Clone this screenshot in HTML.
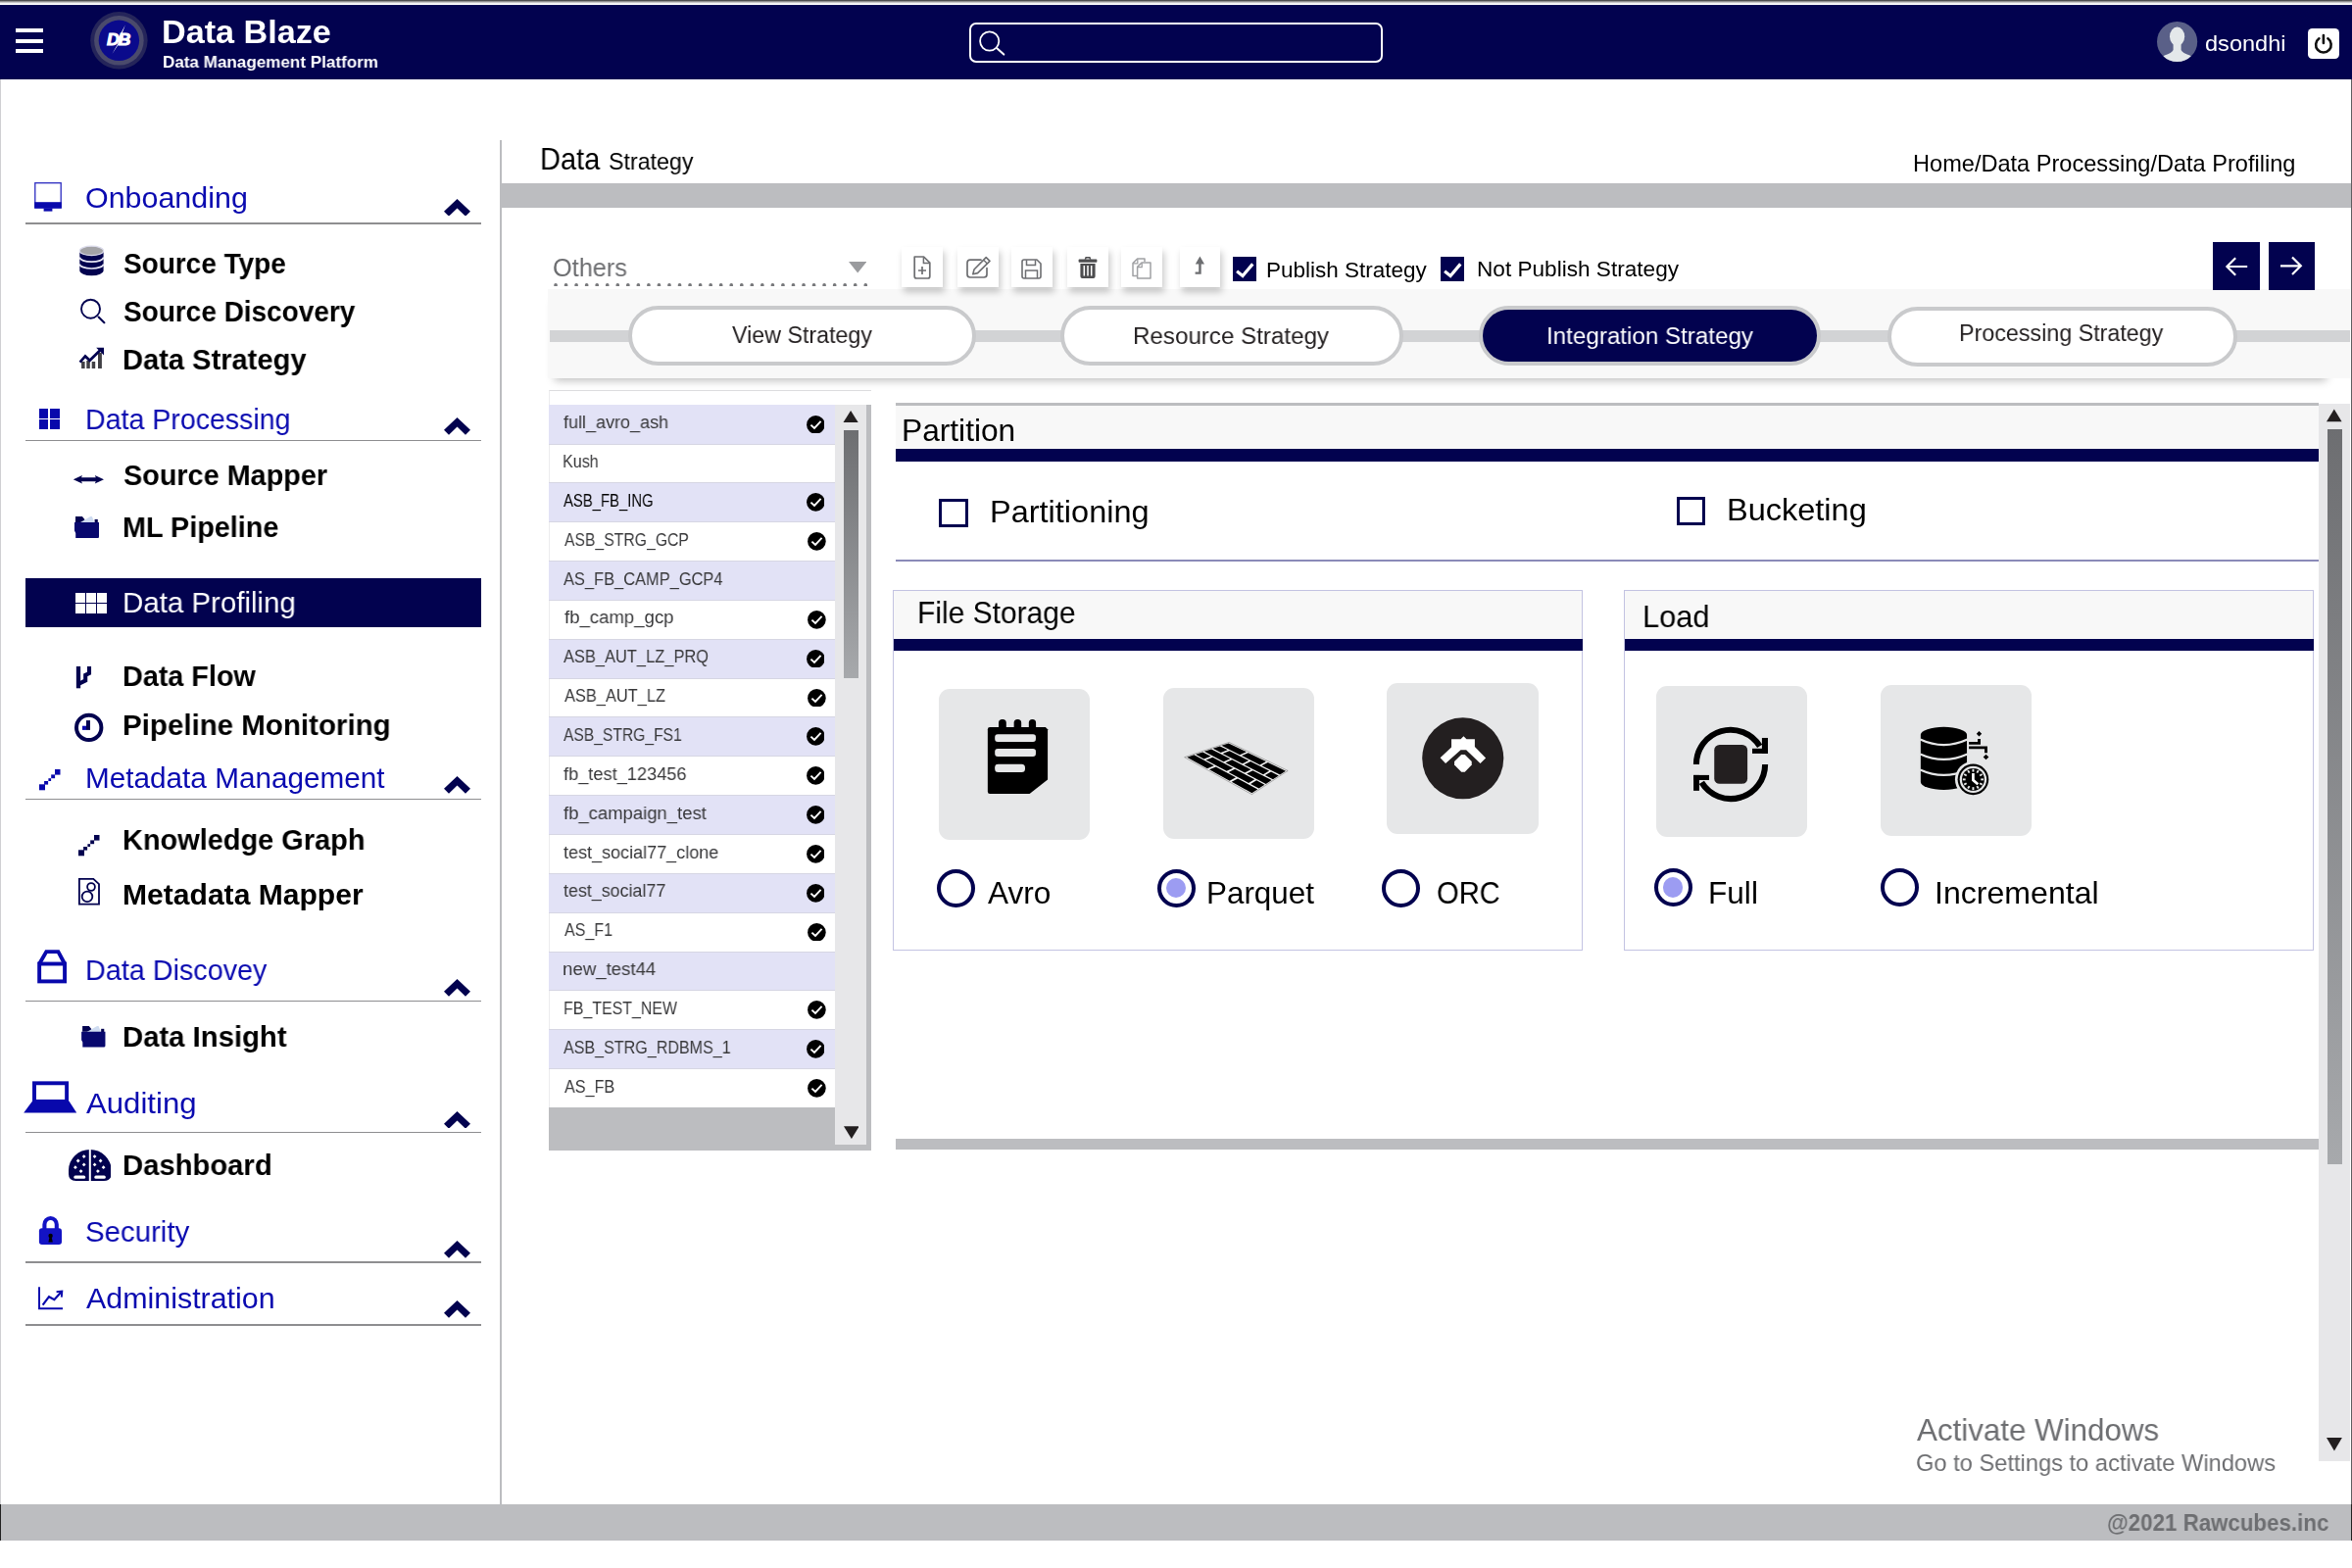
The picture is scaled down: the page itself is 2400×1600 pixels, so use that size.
<!DOCTYPE html>
<html lang="en"><head><meta charset="utf-8"><title>Data Blaze - Data Strategy</title>
<style>
html,body{margin:0;padding:0;background:#fff;}
body{width:2400px;height:1600px;position:relative;overflow:hidden;font-family:"Liberation Sans", sans-serif;}
body>div,body>svg,body>span{position:absolute;}
.t{will-change:transform;white-space:nowrap;line-height:1;transform-origin:0 0;display:block;}
</style></head>
<body>
<div style="left:0.0px;top:0.0px;width:2400.0px;height:3.6px;background:linear-gradient(#2e2e2e,#8a8a8a 35%,#e4e4e4 75%,#fff);"></div>
<div style="left:0.0px;top:5.0px;width:2400.0px;height:76.0px;background:#02024f;"></div>
<div style="left:0.0px;top:81.0px;width:1.2px;height:1454.0px;background:#cfcfd2;"></div>
<div style="left:16.0px;top:29.3px;width:28.0px;height:4.0px;background:#fff;"></div>
<div style="left:16.0px;top:39.5px;width:28.0px;height:4.0px;background:#fff;"></div>
<div style="left:16.0px;top:49.8px;width:28.0px;height:4.0px;background:#fff;"></div>
<svg style="left:90.0px;top:10.0px;" width="62.0" height="62.0" viewBox="0 0 62 62"><circle cx="31.4" cy="31.3" r="29.2" fill="#25255a"/><circle cx="31.4" cy="31.3" r="25.3" fill="#4a4a6c"/><circle cx="31.4" cy="31.3" r="20.7" fill="#0a0a8c"/><text transform="translate(19,36.3) scale(1.1,1)" font-family="Liberation Sans, sans-serif" font-size="16.2" font-weight="700" font-style="italic" fill="#fff" stroke="#fff" stroke-width="0.9" letter-spacing="-1.2">DB</text><path d="M37.8 15.6 L29.6 31 L32.4 31 L24.4 45 L36.2 27.6 L33.4 27.6 Z" fill="#fff"/></svg>
<span class="t" style="left:165.0px;top:16.0px;font-size:33.4px;color:#fff;font-weight:700;transform:scaleX(1.0235);">Data Blaze</span>
<span class="t" style="left:166.4px;top:55.0px;font-size:17.3px;color:#fff;font-weight:700;transform:scaleX(0.9870);">Data Management Platform</span>
<div style="left:989.3px;top:23.0px;width:422.2px;height:41.3px;background:transparent;box-sizing:border-box;border:2px solid #fff;border-radius:7px;"></div>
<svg style="left:995.0px;top:28.0px;" width="36.0" height="34.0" viewBox="0 0 36 34"><circle cx="14.7" cy="14" r="9.6" fill="none" stroke="#fff" stroke-width="1.8"/><path d="M22.6 21.4 L29.3 27.6" stroke="#fff" stroke-width="2" stroke-linecap="round"/></svg>
<svg style="left:2200.0px;top:21.0px;" width="44.0" height="44.0" viewBox="0 0 44 44"><defs><clipPath id="av"><circle cx="21.6" cy="21.5" r="20.6"/></clipPath></defs><circle cx="21.6" cy="21.5" r="20.6" fill="#5a6088"/><g clip-path="url(#av)" fill="#e4e8ea"><ellipse cx="21.6" cy="16.2" rx="7.6" ry="9.6"/><path d="M17.6 22 L25.6 22 L25.6 30 Q27 33 34.5 35.5 Q38 37 38.5 44 L4.7 44 Q5.2 37 8.7 35.5 Q16.2 33 17.6 30 Z"/></g></svg>
<span class="t" style="left:2249.8px;top:34.0px;font-size:22.3px;color:#fff;transform:scaleX(1.0572);">dsondhi</span>
<div style="left:2355.4px;top:28.7px;width:31.6px;height:31.5px;background:#fff;border-radius:4.5px;"></div>
<svg style="left:2355.4px;top:28.7px;" width="31.6" height="31.5" viewBox="0 0 31.6 31.5"><path d="M11.4 10.3 A7.8 7.8 0 1 0 20.4 10.3" fill="none" stroke="#111" stroke-width="2.6" stroke-linecap="round"/><path d="M15.9 7 L15.9 15" stroke="#111" stroke-width="2.6" stroke-linecap="round"/></svg>
<div style="left:510.3px;top:143.0px;width:2.2px;height:1392.0px;background:#bcbdc0;"></div>
<span class="t" style="left:86.7px;top:187.0px;font-size:29.7px;color:#0a0ab0;transform:scaleX(1.0249);">Onboanding</span>
<div style="left:25.5px;top:227.1px;width:465.7px;height:1.8px;background:#8e8e90;"></div>
<svg style="left:453.0px;top:202.7px;" width="27.0" height="17.7" viewBox="0 0 27 17.7"><path d="M13.5 0 L27 12.8 L22 17.7 L13.5 9.4 L5 17.7 L0 12.8 Z" fill="#02024f"/></svg>
<span class="t" style="left:125.8px;top:254.0px;font-size:29.7px;color:#000;font-weight:700;transform:scaleX(0.9419);">Source Type</span>
<span class="t" style="left:125.8px;top:303.0px;font-size:29.7px;color:#000;font-weight:700;transform:scaleX(0.9423);">Source Discovery</span>
<span class="t" style="left:124.7px;top:352.0px;font-size:29.7px;color:#000;font-weight:700;transform:scaleX(0.9797);">Data Strategy</span>
<span class="t" style="left:86.9px;top:413.0px;font-size:29.7px;color:#0a0ab0;transform:scaleX(0.9617);">Data Processing</span>
<div style="left:25.5px;top:448.5px;width:465.7px;height:1.8px;background:#8e8e90;"></div>
<svg style="left:453.0px;top:425.9px;" width="27.0" height="17.7" viewBox="0 0 27 17.7"><path d="M13.5 0 L27 12.8 L22 17.7 L13.5 9.4 L5 17.7 L0 12.8 Z" fill="#02024f"/></svg>
<span class="t" style="left:125.8px;top:470.0px;font-size:29.7px;color:#000;font-weight:700;transform:scaleX(0.9697);">Source Mapper</span>
<span class="t" style="left:124.7px;top:523.0px;font-size:29.7px;color:#000;font-weight:700;transform:scaleX(0.9689);">ML Pipeline</span>
<div style="left:25.5px;top:590.3px;width:465.7px;height:49.5px;background:#02024f;"></div>
<span class="t" style="left:125.0px;top:600.0px;font-size:29.7px;color:#fff;transform:scaleX(0.9916);">Data Profiling</span>
<span class="t" style="left:124.7px;top:675.0px;font-size:29.7px;color:#000;font-weight:700;transform:scaleX(0.9690);">Data Flow</span>
<span class="t" style="left:124.6px;top:725.0px;font-size:29.7px;color:#000;font-weight:700;transform:scaleX(0.9936);">Pipeline Monitoring</span>
<span class="t" style="left:86.6px;top:779.0px;font-size:29.7px;color:#0a0ab0;transform:scaleX(1.0008);">Metadata Management</span>
<div style="left:25.5px;top:814.5px;width:465.7px;height:1.8px;background:#8e8e90;"></div>
<svg style="left:453.0px;top:791.9px;" width="27.0" height="17.7" viewBox="0 0 27 17.7"><path d="M13.5 0 L27 12.8 L22 17.7 L13.5 9.4 L5 17.7 L0 12.8 Z" fill="#02024f"/></svg>
<span class="t" style="left:124.7px;top:842.0px;font-size:29.7px;color:#000;font-weight:700;transform:scaleX(0.9741);">Knowledge Graph</span>
<span class="t" style="left:124.6px;top:898.0px;font-size:29.7px;color:#000;font-weight:700;transform:scaleX(1.0130);">Metadata Mapper</span>
<span class="t" style="left:86.6px;top:975.0px;font-size:29.7px;color:#0a0ab0;transform:scaleX(0.9688);">Data Discovey</span>
<div style="left:25.5px;top:1020.6px;width:465.7px;height:1.8px;background:#8e8e90;"></div>
<svg style="left:453.0px;top:999.0px;" width="27.0" height="17.7" viewBox="0 0 27 17.7"><path d="M13.5 0 L27 12.8 L22 17.7 L13.5 9.4 L5 17.7 L0 12.8 Z" fill="#02024f"/></svg>
<span class="t" style="left:124.6px;top:1043.0px;font-size:29.7px;color:#000;font-weight:700;transform:scaleX(0.9865);">Data Insight</span>
<span class="t" style="left:87.8px;top:1111.0px;font-size:29.7px;color:#0a0ab0;transform:scaleX(1.0491);">Auditing</span>
<div style="left:25.5px;top:1154.6px;width:465.7px;height:1.8px;background:#8e8e90;"></div>
<svg style="left:453.0px;top:1133.8px;" width="27.0" height="17.7" viewBox="0 0 27 17.7"><path d="M13.5 0 L27 12.8 L22 17.7 L13.5 9.4 L5 17.7 L0 12.8 Z" fill="#02024f"/></svg>
<span class="t" style="left:124.5px;top:1174.0px;font-size:29.7px;color:#000;font-weight:700;transform:scaleX(0.9847);">Dashboard</span>
<span class="t" style="left:86.7px;top:1242.0px;font-size:29.7px;color:#0a0ab0;transform:scaleX(0.9901);">Security</span>
<div style="left:25.5px;top:1286.8px;width:465.7px;height:1.8px;background:#8e8e90;"></div>
<svg style="left:453.0px;top:1266.0px;" width="27.0" height="17.7" viewBox="0 0 27 17.7"><path d="M13.5 0 L27 12.8 L22 17.7 L13.5 9.4 L5 17.7 L0 12.8 Z" fill="#02024f"/></svg>
<span class="t" style="left:87.9px;top:1310.0px;font-size:29.7px;color:#0a0ab0;transform:scaleX(1.0241);">Administration</span>
<div style="left:25.5px;top:1350.8px;width:465.7px;height:1.8px;background:#8e8e90;"></div>
<svg style="left:453.0px;top:1327.2px;" width="27.0" height="17.7" viewBox="0 0 27 17.7"><path d="M13.5 0 L27 12.8 L22 17.7 L13.5 9.4 L5 17.7 L0 12.8 Z" fill="#02024f"/></svg>
<span class="t" style="left:551.4px;top:147.0px;font-size:31.5px;color:#000;transform:scaleX(0.9208);">Data</span>
<span class="t" style="left:620.7px;top:153.0px;font-size:24.0px;color:#000;transform:scaleX(0.9665);">Strategy</span>
<span class="t" style="left:1952.3px;top:156.0px;font-size:23.2px;color:#000;transform:scaleX(1.0166);">Home/Data Processing/Data Profiling</span>
<div style="left:511.5px;top:187.0px;width:1887.0px;height:24.7px;background:#bcbdc0;"></div>
<div style="left:0.0px;top:1534.7px;width:2400.0px;height:37.7px;background:#bcbdc0;"></div>
<div style="left:0.0px;top:1534.7px;width:1.2px;height:37.7px;background:#222;"></div>
<div style="left:2398.8px;top:1534.7px;width:1.2px;height:37.7px;background:#222;"></div>
<span class="t" style="left:2150.3px;top:1543.0px;font-size:23.2px;color:#6d6e71;font-weight:700;transform:scaleX(0.9619);">@2021 Rawcubes.inc</span>
<span class="t" style="left:563.6px;top:261.0px;font-size:25.5px;color:#6d6e71;transform:scaleX(0.9919);">Others</span>
<svg style="left:865.9px;top:267.0px;" width="18.4" height="11.6" viewBox="0 0 18.4 11.6"><path d="M0 0 L18.4 0 L9.2 11.6 Z" fill="#9a9b9e"/></svg>
<svg style="left:564.6px;top:288.5px;" width="322.0" height="3.8" viewBox="0 0 322 3.8"><g fill="#77787b"><circle cx="1.90" cy="1.9" r="1.85"/><circle cx="12.45" cy="1.9" r="1.85"/><circle cx="23.00" cy="1.9" r="1.85"/><circle cx="33.55" cy="1.9" r="1.85"/><circle cx="44.10" cy="1.9" r="1.85"/><circle cx="54.65" cy="1.9" r="1.85"/><circle cx="65.20" cy="1.9" r="1.85"/><circle cx="75.75" cy="1.9" r="1.85"/><circle cx="86.30" cy="1.9" r="1.85"/><circle cx="96.85" cy="1.9" r="1.85"/><circle cx="107.40" cy="1.9" r="1.85"/><circle cx="117.95" cy="1.9" r="1.85"/><circle cx="128.50" cy="1.9" r="1.85"/><circle cx="139.05" cy="1.9" r="1.85"/><circle cx="149.60" cy="1.9" r="1.85"/><circle cx="160.15" cy="1.9" r="1.85"/><circle cx="170.70" cy="1.9" r="1.85"/><circle cx="181.25" cy="1.9" r="1.85"/><circle cx="191.80" cy="1.9" r="1.85"/><circle cx="202.35" cy="1.9" r="1.85"/><circle cx="212.90" cy="1.9" r="1.85"/><circle cx="223.45" cy="1.9" r="1.85"/><circle cx="234.00" cy="1.9" r="1.85"/><circle cx="244.55" cy="1.9" r="1.85"/><circle cx="255.10" cy="1.9" r="1.85"/><circle cx="265.65" cy="1.9" r="1.85"/><circle cx="276.20" cy="1.9" r="1.85"/><circle cx="286.75" cy="1.9" r="1.85"/><circle cx="297.30" cy="1.9" r="1.85"/><circle cx="307.85" cy="1.9" r="1.85"/><circle cx="318.40" cy="1.9" r="1.85"/></g></svg>
<div style="left:566.0px;top:300.0px;width:1808.0px;height:80.0px;background:#fff;box-shadow:0 8px 9px rgba(0,0,0,.28);"></div>
<div style="left:559.0px;top:295.0px;width:1839.4px;height:91.0px;background:#f8f8f8;"></div>
<div style="left:920.3px;top:252.4px;width:41.5px;height:40.2px;background:#fff;box-shadow:2px 5px 7px rgba(0,0,0,.22);"></div>
<div style="left:976.5px;top:252.4px;width:42.5px;height:40.2px;background:#fff;box-shadow:2px 5px 7px rgba(0,0,0,.22);"></div>
<div style="left:1031.9px;top:252.4px;width:42.1px;height:40.2px;background:#fff;box-shadow:2px 5px 7px rgba(0,0,0,.22);"></div>
<div style="left:1088.8px;top:252.4px;width:42.1px;height:40.2px;background:#fff;box-shadow:2px 5px 7px rgba(0,0,0,.22);"></div>
<div style="left:1144.0px;top:252.4px;width:42.0px;height:40.2px;background:#fff;box-shadow:2px 5px 7px rgba(0,0,0,.22);"></div>
<div style="left:1203.6px;top:252.4px;width:41.4px;height:40.2px;background:#fff;box-shadow:2px 5px 7px rgba(0,0,0,.22);"></div>
<svg style="left:930.0px;top:260.0px;" width="22.0" height="26.0" viewBox="0 0 22 26"><path d="M3.2 2 L12.6 2 L18.8 8.2 L18.8 22 Q18.8 24 16.8 24 L5.2 24 Q3.2 24 3.2 22 Z" fill="none" stroke="#6d6e71" stroke-width="1.7" stroke-linejoin="round"/><path d="M12.4 2.4 L12.4 8.4 L18.6 8.4" fill="none" stroke="#6d6e71" stroke-width="1.5"/><path d="M11 12 L11 20 M7 16 L15 16" stroke="#6d6e71" stroke-width="1.7"/></svg>
<svg style="left:984.0px;top:260.0px;" width="28.0" height="26.0" viewBox="0 0 28 26"><path d="M17 5.2 L6 5.2 Q3 5.2 3 8.2 L3 20 Q3 23 6 23 L20 23 Q23 23 23 20 L23 13.5" fill="none" stroke="#6d6e71" stroke-width="1.7" stroke-linecap="round"/><path d="M22.2 2.6 L26 6.4 L13.6 18.6 L8.8 19.8 L10 15 Z" fill="#fff" stroke="#6d6e71" stroke-width="1.6" stroke-linejoin="round"/><path d="M19.6 5.2 L23.4 9" stroke="#6d6e71" stroke-width="1.4"/></svg>
<svg style="left:1041.0px;top:263.0px;" width="23.0" height="23.0" viewBox="0 0 23 23"><path d="M2 4 Q2 2 4 2 L17 2 L21 6 L21 19 Q21 21 19 21 L4 21 Q2 21 2 19 Z" fill="none" stroke="#6d6e71" stroke-width="1.6" stroke-linejoin="round"/><path d="M6.5 2.2 L6.5 7.6 L15.5 7.6 L15.5 2.2 M5.5 21 L5.5 13 L17.5 13 L17.5 21" fill="none" stroke="#6d6e71" stroke-width="1.5"/></svg>
<svg style="left:1100.0px;top:261.0px;" width="20.0" height="24.0" viewBox="0 0 20 24"><g fill="#4d4d4f"><rect x="0.6" y="3.6" width="18.8" height="3.2" rx="0.8"/><path d="M6.6 3.8 L7.6 1 L12.4 1 L13.4 3.8 L11.8 3.8 L11.4 2.6 L8.6 2.6 L8.2 3.8 Z"/><path d="M2.4 8 L17.6 8 L17.6 21 Q17.6 23 15.6 23 L4.4 23 Q2.4 23 2.4 21 Z"/></g><g stroke="#fff" stroke-width="1.5"><path d="M6.3 10 L6.3 20.6 M10 10 L10 20.6 M13.7 10 L13.7 20.6"/></g></svg>
<svg style="left:1154.0px;top:262.0px;" width="22.0" height="24.0" viewBox="0 0 22 24"><path d="M6 19.4 L2 19.4 L2 6.6 L6.6 2 L14 2 L14 5" fill="none" stroke="#a0a1a4" stroke-width="1.5" stroke-linejoin="round"/><path d="M6.8 2.2 L6.8 6.8 L2.2 6.8" fill="none" stroke="#a0a1a4" stroke-width="1.3"/><path d="M6.6 22 L6.6 10.4 L11 6 L20 6 L20 22 Z" fill="#fff" stroke="#a0a1a4" stroke-width="1.5" stroke-linejoin="round"/><path d="M11.2 6.2 L11.2 10.6 L6.8 10.6" fill="none" stroke="#a0a1a4" stroke-width="1.3"/></svg>
<svg style="left:1214.0px;top:261.0px;" width="20.0" height="22.0" viewBox="0 0 20 22"><path d="M10.4 0.6 L15 8.4 L11.7 8.4 L11.7 18.8 L5.6 18.8 L5.6 16.6 L9.2 16.6 L9.2 8.4 L5.8 8.4 Z" fill="#6d6e71"/></svg>
<div style="left:1257.7px;top:262.0px;width:24.6px;height:24.6px;background:#02024f;"></div>
<svg style="left:1257.7px;top:262.0px;" width="24.6" height="24.6" viewBox="0 0 24 24"><path d="M4 14.4 L9.8 19 L19.8 7.2" fill="none" stroke="#fff" stroke-width="3.1"/></svg>
<span class="t" style="left:1292.4px;top:265.0px;font-size:22.4px;color:#000;transform:scaleX(1.0039);">Publish Strategy</span>
<div style="left:1469.8px;top:262.0px;width:24.6px;height:24.6px;background:#02024f;"></div>
<svg style="left:1469.8px;top:262.0px;" width="24.6" height="24.6" viewBox="0 0 24 24"><path d="M4 14.4 L9.8 19 L19.8 7.2" fill="none" stroke="#fff" stroke-width="3.1"/></svg>
<span class="t" style="left:1507.0px;top:264.0px;font-size:22.4px;color:#000;transform:scaleX(1.0093);">Not Publish Strategy</span>
<div style="left:2258.0px;top:247.0px;width:47.5px;height:48.9px;background:#02024f;"></div>
<svg style="left:2258.0px;top:247.0px;" width="47.3" height="48.4" viewBox="0 0 47.3 48.4"><path d="M35.2 25 L14.7 25 M23.2 16.2 L14.4 25 L23.2 33.8" fill="none" stroke="#fff" stroke-width="2.2"/></svg>
<div style="left:2314.8px;top:247.0px;width:47.5px;height:48.9px;background:#02024f;"></div>
<svg style="left:2314.8px;top:247.0px;" width="47.3" height="48.4" viewBox="0 0 47.3 48.4"><path d="M12 24.3 L32.5 24.3 M24 15.5 L32.8 24.3 L24 33.1" fill="none" stroke="#fff" stroke-width="2.2"/></svg>
<div style="left:561.0px;top:337.1px;width:1837.4px;height:11.9px;background:#d2d3d5;"></div>
<div style="left:641.4px;top:311.8px;width:354.4px;height:61.4px;background:#fff;box-sizing:border-box;border:4px solid #c9cacc;border-radius:30.7px;"></div>
<span class="t" style="left:747.4px;top:330.0px;font-size:24.7px;color:#231f20;transform:scaleX(0.9412);">View Strategy</span>
<div style="left:1081.8px;top:311.8px;width:350.6px;height:61.4px;background:#fff;box-sizing:border-box;border:4px solid #c9cacc;border-radius:30.7px;"></div>
<span class="t" style="left:1156.3px;top:331.0px;font-size:24.7px;color:#231f20;transform:scaleX(0.9783);">Resource Strategy</span>
<div style="left:1509.0px;top:311.8px;width:349.3px;height:61.4px;background:#02024f;box-sizing:border-box;border:4px solid #c9cacc;border-radius:30.7px;"></div>
<span class="t" style="left:1577.5px;top:331.0px;font-size:24.7px;color:#fff;transform:scaleX(0.9792);">Integration Strategy</span>
<div style="left:1925.8px;top:313.0px;width:357.6px;height:61.4px;background:#fff;box-sizing:border-box;border:4px solid #c9cacc;border-radius:30.7px;"></div>
<span class="t" style="left:1999.2px;top:328.0px;font-size:24.7px;color:#231f20;transform:scaleX(0.9431);">Processing Strategy</span>
<div style="left:560.4px;top:398.4px;width:329.0px;height:775.3px;background:#fff;box-sizing:border-box;border-top:1.5px solid #dcdcde;border-left:1px solid #ececee;"></div>
<div style="left:560.4px;top:413.0px;width:291.3px;height:39.8px;background:#e2e2f6;"></div>
<span class="t" style="left:574.6px;top:422.0px;font-size:18.8px;color:#38383a;transform:scaleX(0.9580);">full_avro_ash</span>
<svg style="left:822.6px;top:423.7px;" width="18.8" height="18.8" viewBox="0 0 18.8 18.8"><circle cx="9.4" cy="9.4" r="9.3" fill="#000"/><path d="M4.4 9.6 L8 13 L14.6 5.8" fill="none" stroke="#fff" stroke-width="1.9"/></svg>
<span class="t" style="left:573.6px;top:462.0px;font-size:18.8px;color:#38383a;transform:scaleX(0.8589);">Kush</span>
<div style="left:560.4px;top:492.7px;width:291.3px;height:39.8px;background:#e2e2f6;"></div>
<span class="t" style="left:574.9px;top:502.0px;font-size:18.8px;color:#000;transform:scaleX(0.7909);">ASB_FB_ING</span>
<svg style="left:822.6px;top:503.4px;" width="18.8" height="18.8" viewBox="0 0 18.8 18.8"><circle cx="9.4" cy="9.4" r="9.3" fill="#000"/><path d="M4.4 9.6 L8 13 L14.6 5.8" fill="none" stroke="#fff" stroke-width="1.9"/></svg>
<span class="t" style="left:576.1px;top:542.0px;font-size:18.8px;color:#38383a;transform:scaleX(0.8382);">ASB_STRG_GCP</span>
<svg style="left:823.8px;top:543.2px;" width="18.8" height="18.8" viewBox="0 0 18.8 18.8"><circle cx="9.4" cy="9.4" r="9.3" fill="#000"/><path d="M4.4 9.6 L8 13 L14.6 5.8" fill="none" stroke="#fff" stroke-width="1.9"/></svg>
<div style="left:560.4px;top:572.4px;width:291.3px;height:39.8px;background:#e2e2f6;"></div>
<span class="t" style="left:574.9px;top:582.0px;font-size:18.8px;color:#38383a;transform:scaleX(0.8747);">AS_FB_CAMP_GCP4</span>
<span class="t" style="left:575.8px;top:621.0px;font-size:18.8px;color:#38383a;transform:scaleX(0.9883);">fb_camp_gcp</span>
<svg style="left:823.8px;top:622.9px;" width="18.8" height="18.8" viewBox="0 0 18.8 18.8"><circle cx="9.4" cy="9.4" r="9.3" fill="#000"/><path d="M4.4 9.6 L8 13 L14.6 5.8" fill="none" stroke="#fff" stroke-width="1.9"/></svg>
<div style="left:560.4px;top:652.0px;width:291.3px;height:39.8px;background:#e2e2f6;"></div>
<span class="t" style="left:574.9px;top:661.0px;font-size:18.8px;color:#38383a;transform:scaleX(0.8753);">ASB_AUT_LZ_PRQ</span>
<svg style="left:822.6px;top:662.7px;" width="18.8" height="18.8" viewBox="0 0 18.8 18.8"><circle cx="9.4" cy="9.4" r="9.3" fill="#000"/><path d="M4.4 9.6 L8 13 L14.6 5.8" fill="none" stroke="#fff" stroke-width="1.9"/></svg>
<span class="t" style="left:576.1px;top:701.0px;font-size:18.8px;color:#38383a;transform:scaleX(0.8736);">ASB_AUT_LZ</span>
<svg style="left:823.8px;top:702.6px;" width="18.8" height="18.8" viewBox="0 0 18.8 18.8"><circle cx="9.4" cy="9.4" r="9.3" fill="#000"/><path d="M4.4 9.6 L8 13 L14.6 5.8" fill="none" stroke="#fff" stroke-width="1.9"/></svg>
<div style="left:560.4px;top:731.7px;width:291.3px;height:39.8px;background:#e2e2f6;"></div>
<span class="t" style="left:574.9px;top:741.0px;font-size:18.8px;color:#38383a;transform:scaleX(0.8318);">ASB_STRG_FS1</span>
<svg style="left:822.6px;top:742.4px;" width="18.8" height="18.8" viewBox="0 0 18.8 18.8"><circle cx="9.4" cy="9.4" r="9.3" fill="#000"/><path d="M4.4 9.6 L8 13 L14.6 5.8" fill="none" stroke="#fff" stroke-width="1.9"/></svg>
<span class="t" style="left:574.6px;top:781.0px;font-size:18.8px;color:#38383a;transform:scaleX(0.9696);">fb_test_123456</span>
<svg style="left:822.6px;top:782.3px;" width="18.8" height="18.8" viewBox="0 0 18.8 18.8"><circle cx="9.4" cy="9.4" r="9.3" fill="#000"/><path d="M4.4 9.6 L8 13 L14.6 5.8" fill="none" stroke="#fff" stroke-width="1.9"/></svg>
<div style="left:560.4px;top:811.4px;width:291.3px;height:39.8px;background:#e2e2f6;"></div>
<span class="t" style="left:574.6px;top:821.0px;font-size:18.8px;color:#38383a;transform:scaleX(0.9834);">fb_campaign_test</span>
<svg style="left:822.6px;top:822.1px;" width="18.8" height="18.8" viewBox="0 0 18.8 18.8"><circle cx="9.4" cy="9.4" r="9.3" fill="#000"/><path d="M4.4 9.6 L8 13 L14.6 5.8" fill="none" stroke="#fff" stroke-width="1.9"/></svg>
<span class="t" style="left:574.6px;top:861.0px;font-size:18.8px;color:#38383a;transform:scaleX(0.9594);">test_social77_clone</span>
<svg style="left:822.6px;top:861.9px;" width="18.8" height="18.8" viewBox="0 0 18.8 18.8"><circle cx="9.4" cy="9.4" r="9.3" fill="#000"/><path d="M4.4 9.6 L8 13 L14.6 5.8" fill="none" stroke="#fff" stroke-width="1.9"/></svg>
<div style="left:560.4px;top:891.1px;width:291.3px;height:39.8px;background:#e2e2f6;"></div>
<span class="t" style="left:574.6px;top:900.0px;font-size:18.8px;color:#38383a;transform:scaleX(0.9512);">test_social77</span>
<svg style="left:822.6px;top:901.8px;" width="18.8" height="18.8" viewBox="0 0 18.8 18.8"><circle cx="9.4" cy="9.4" r="9.3" fill="#000"/><path d="M4.4 9.6 L8 13 L14.6 5.8" fill="none" stroke="#fff" stroke-width="1.9"/></svg>
<span class="t" style="left:576.1px;top:940.0px;font-size:18.8px;color:#38383a;transform:scaleX(0.8536);">AS_F1</span>
<svg style="left:823.8px;top:941.6px;" width="18.8" height="18.8" viewBox="0 0 18.8 18.8"><circle cx="9.4" cy="9.4" r="9.3" fill="#000"/><path d="M4.4 9.6 L8 13 L14.6 5.8" fill="none" stroke="#fff" stroke-width="1.9"/></svg>
<div style="left:560.4px;top:970.8px;width:291.3px;height:39.8px;background:#e2e2f6;"></div>
<span class="t" style="left:573.7px;top:980.0px;font-size:18.8px;color:#38383a;transform:scaleX(0.9919);">new_test44</span>
<span class="t" style="left:574.8px;top:1020.0px;font-size:18.8px;color:#38383a;transform:scaleX(0.8482);">FB_TEST_NEW</span>
<svg style="left:823.8px;top:1021.3px;" width="18.8" height="18.8" viewBox="0 0 18.8 18.8"><circle cx="9.4" cy="9.4" r="9.3" fill="#000"/><path d="M4.4 9.6 L8 13 L14.6 5.8" fill="none" stroke="#fff" stroke-width="1.9"/></svg>
<div style="left:560.4px;top:1050.4px;width:291.3px;height:39.8px;background:#e2e2f6;"></div>
<span class="t" style="left:574.9px;top:1060.0px;font-size:18.8px;color:#38383a;transform:scaleX(0.8558);">ASB_STRG_RDBMS_1</span>
<svg style="left:822.6px;top:1061.1px;" width="18.8" height="18.8" viewBox="0 0 18.8 18.8"><circle cx="9.4" cy="9.4" r="9.3" fill="#000"/><path d="M4.4 9.6 L8 13 L14.6 5.8" fill="none" stroke="#fff" stroke-width="1.9"/></svg>
<span class="t" style="left:576.1px;top:1100.0px;font-size:18.8px;color:#38383a;transform:scaleX(0.8602);">AS_FB</span>
<svg style="left:823.8px;top:1101.0px;" width="18.8" height="18.8" viewBox="0 0 18.8 18.8"><circle cx="9.4" cy="9.4" r="9.3" fill="#000"/><path d="M4.4 9.6 L8 13 L14.6 5.8" fill="none" stroke="#fff" stroke-width="1.9"/></svg>
<div style="left:560.4px;top:452.5px;width:291.3px;height:1.1px;background:#d6d6e3;"></div>
<div style="left:560.4px;top:492.4px;width:291.3px;height:1.1px;background:#d6d6e3;"></div>
<div style="left:560.4px;top:532.2px;width:291.3px;height:1.1px;background:#d6d6e3;"></div>
<div style="left:560.4px;top:572.1px;width:291.3px;height:1.1px;background:#d6d6e3;"></div>
<div style="left:560.4px;top:611.9px;width:291.3px;height:1.1px;background:#d6d6e3;"></div>
<div style="left:560.4px;top:651.7px;width:291.3px;height:1.1px;background:#d6d6e3;"></div>
<div style="left:560.4px;top:691.6px;width:291.3px;height:1.1px;background:#d6d6e3;"></div>
<div style="left:560.4px;top:731.4px;width:291.3px;height:1.1px;background:#d6d6e3;"></div>
<div style="left:560.4px;top:771.3px;width:291.3px;height:1.1px;background:#d6d6e3;"></div>
<div style="left:560.4px;top:811.1px;width:291.3px;height:1.1px;background:#d6d6e3;"></div>
<div style="left:560.4px;top:850.9px;width:291.3px;height:1.1px;background:#d6d6e3;"></div>
<div style="left:560.4px;top:890.8px;width:291.3px;height:1.1px;background:#d6d6e3;"></div>
<div style="left:560.4px;top:930.6px;width:291.3px;height:1.1px;background:#d6d6e3;"></div>
<div style="left:560.4px;top:970.5px;width:291.3px;height:1.1px;background:#d6d6e3;"></div>
<div style="left:560.4px;top:1010.3px;width:291.3px;height:1.1px;background:#d6d6e3;"></div>
<div style="left:560.4px;top:1050.1px;width:291.3px;height:1.1px;background:#d6d6e3;"></div>
<div style="left:560.4px;top:1090.0px;width:291.3px;height:1.1px;background:#d6d6e3;"></div>
<div style="left:560.4px;top:1130.0px;width:328.8px;height:43.7px;background:#bcbdc0;"></div>
<div style="left:852.0px;top:413.0px;width:32.4px;height:754.9px;background:#e7e7e9;"></div>
<div style="left:884.3px;top:413.0px;width:5.1px;height:760.7px;background:#bcbdc0;"></div>
<svg style="left:860.0px;top:418.6px;" width="16.2" height="12.8" viewBox="0 0 16.2 12.8"><path d="M8.1 0 L16.2 12.8 L0 12.8 Z" fill="#231f20"/></svg>
<svg style="left:860.5px;top:1148.8px;" width="15.8" height="13.4" viewBox="0 0 15.6 12.6"><path d="M0 0 L15.6 0 L7.8 12.6 Z" fill="#231f20"/></svg>
<div style="left:860.6px;top:438.5px;width:15.5px;height:253.0px;background:linear-gradient(#6d6e71,#a7a9ac);"></div>
<div style="left:2366.0px;top:411.8px;width:31.8px;height:1079.7px;background:#e7e7e9;"></div>
<div style="left:913.7px;top:413.3px;width:1452.5px;height:45.5px;background:#f8f8f8;"></div>
<div style="left:913.7px;top:411.4px;width:1452.3px;height:2.4px;background:#bcbdc0;"></div>
<div style="left:913.7px;top:458.2px;width:1452.5px;height:12.4px;background:#02024f;"></div>
<span class="t" style="left:920.0px;top:424.0px;font-size:31.7px;color:#000;transform:scaleX(0.9965);">Partition</span>
<div style="left:958.4px;top:509.0px;width:29.3px;height:29.3px;background:#fff;box-sizing:border-box;border:3.6px solid #02024f;"></div>
<span class="t" style="left:1009.7px;top:507.0px;font-size:31.3px;color:#000;transform:scaleX(1.0382);">Partitioning</span>
<div style="left:1711.2px;top:506.6px;width:29.3px;height:29.3px;background:#fff;box-sizing:border-box;border:3.6px solid #02024f;"></div>
<span class="t" style="left:1761.7px;top:505.0px;font-size:31.3px;color:#000;transform:scaleX(1.0386);">Bucketing</span>
<div style="left:913.7px;top:571.3px;width:1452.5px;height:1.6px;background:#8a8ab8;"></div>
<div style="left:913.7px;top:1162.2px;width:1452.3px;height:11.1px;background:#bcbdc0;"></div>
<svg style="left:2374.3px;top:417.0px;" width="15.6" height="13.6" viewBox="0 0 15.8 13"><path d="M7.9 0 L15.8 13 L0 13 Z" fill="#231f20"/></svg>
<svg style="left:2373.8px;top:1467.2px;" width="15.9" height="13.6" viewBox="0 0 15.9 13.6"><path d="M0 0 L15.9 0 L7.95 13.6 Z" fill="#231f20"/></svg>
<div style="left:2374.5px;top:437.5px;width:15.3px;height:750.3px;background:linear-gradient(#6d6e71,#a7a9ac);"></div>
<div style="left:911.2px;top:602.0px;width:704.0px;height:368.2px;background:#fff;box-sizing:border-box;border:1.2px solid #c3c3e2;"></div>
<div style="left:912.4px;top:603.2px;width:701.6px;height:48.5px;background:#f8f8f8;"></div>
<div style="left:912.4px;top:652.0px;width:702.8px;height:12.0px;background:#02024f;"></div>
<span class="t" style="left:936.1px;top:610.0px;font-size:31.5px;color:#000;transform:scaleX(0.9514);">File Storage</span>
<div style="left:1656.6px;top:602.2px;width:704.6px;height:367.9px;background:#fff;box-sizing:border-box;border:1.2px solid #c3c3e2;"></div>
<div style="left:1657.8px;top:603.4px;width:702.2px;height:48.5px;background:#f8f8f8;"></div>
<div style="left:1657.8px;top:652.0px;width:703.4px;height:12.0px;background:#02024f;"></div>
<span class="t" style="left:1675.6px;top:614.0px;font-size:31.5px;color:#000;transform:scaleX(0.9776);">Load</span>
<div style="left:958.2px;top:703.1px;width:154.3px;height:154.3px;background:#e6e7e8;border-radius:11px;"></div>
<div style="left:1187.0px;top:701.8px;width:154.3px;height:154.3px;background:#e6e7e8;border-radius:11px;"></div>
<div style="left:1415.4px;top:696.8px;width:154.3px;height:154.3px;background:#e6e7e8;border-radius:11px;"></div>
<div style="left:1689.6px;top:699.7px;width:154.3px;height:154.3px;background:#e6e7e8;border-radius:11px;"></div>
<div style="left:1918.5px;top:698.7px;width:154.3px;height:154.3px;background:#e6e7e8;border-radius:11px;"></div>
<div style="left:956.0px;top:886.5px;width:39.0px;height:39.0px;background:#fff;box-sizing:border-box;border:4.6px solid #02024f;border-radius:50%;"></div>
<span class="t" style="left:1007.8px;top:896.0px;font-size:31.4px;color:#000;transform:scaleX(1.0063);">Avro</span>
<div style="left:1180.5px;top:886.5px;width:39.0px;height:39.0px;background:#fff;box-sizing:border-box;border:4.6px solid #02024f;border-radius:50%;"></div>
<div style="left:1189.7px;top:895.7px;width:20.6px;height:20.6px;background:#9c9cf2;border-radius:50%;"></div>
<span class="t" style="left:1230.9px;top:896.0px;font-size:31.4px;color:#000;transform:scaleX(0.9986);">Parquet</span>
<div style="left:1410.2px;top:886.5px;width:39.0px;height:39.0px;background:#fff;box-sizing:border-box;border:4.6px solid #02024f;border-radius:50%;"></div>
<span class="t" style="left:1465.6px;top:896.0px;font-size:31.4px;color:#000;transform:scaleX(0.9287);">ORC</span>
<div style="left:1687.7px;top:886.0px;width:39.0px;height:39.0px;background:#fff;box-sizing:border-box;border:4.6px solid #02024f;border-radius:50%;"></div>
<div style="left:1696.9px;top:895.2px;width:20.6px;height:20.6px;background:#9c9cf2;border-radius:50%;"></div>
<span class="t" style="left:1743.1px;top:896.0px;font-size:31.4px;color:#000;transform:scaleX(1.0062);">Full</span>
<div style="left:1918.5px;top:886.0px;width:39.0px;height:39.0px;background:#fff;box-sizing:border-box;border:4.6px solid #02024f;border-radius:50%;"></div>
<span class="t" style="left:1973.7px;top:896.0px;font-size:31.4px;color:#000;transform:scaleX(1.0219);">Incremental</span>
<span class="t" style="left:1956.1px;top:1444.0px;font-size:31.5px;color:#6d6e71;transform:scaleX(0.9944);">Activate Windows</span>
<span class="t" style="left:1955.0px;top:1481.0px;font-size:24.5px;color:#6d6e71;transform:scaleX(0.9661);">Go to Settings to activate Windows</span>
<svg style="left:34.0px;top:185.0px;" width="30.0" height="32.0" viewBox="0 0 30 32"><rect x="1.8" y="1.7" width="26.4" height="25.2" fill="#fff" stroke="#2a2ac0" stroke-width="1.3"/><rect x="1.2" y="21.2" width="27.6" height="6.4" fill="#0808ac"/><rect x="10.6" y="27.4" width="8.8" height="3.2" fill="#0808ac"/></svg>
<svg style="left:80.0px;top:250.0px;" width="27.0" height="33.0" viewBox="0 0 27 33"><g fill="#02024f"><path d="M1.3 6 L25.6 6 L25.6 26 A12.15 5.2 0 0 1 1.3 26 Z"/></g><g fill="none" stroke="#e8e8f4" stroke-width="1.7"><path d="M1.3 12.6 A12.15 4.6 0 0 0 25.6 12.6"/><path d="M1.3 19.4 A12.15 4.6 0 0 0 25.6 19.4"/></g><ellipse cx="13.45" cy="5.9" rx="12.15" ry="4.7" fill="#a3a3a6" stroke="#dcdcec" stroke-width="1.2"/></svg>
<svg style="left:80.0px;top:303.0px;" width="30.0" height="30.0" viewBox="0 0 30 30"><circle cx="12.5" cy="12.2" r="9.5" fill="none" stroke="#02024f" stroke-width="1.9"/><path d="M20.6 20.6 L26.4 26.2" stroke="#02024f" stroke-width="2.1" stroke-linecap="round"/></svg>
<svg style="left:80.0px;top:353.0px;" width="28.0" height="25.0" viewBox="0 0 28 25"><g fill="#414045"><rect x="3.1" y="16" width="3.5" height="7"/><rect x="8.3" y="15" width="3.5" height="8"/><rect x="13.7" y="16" width="3.5" height="7"/><rect x="20" y="7" width="3.9" height="16"/></g><path d="M1.6 16.6 L7 10.4 L11.6 14.8 L22.6 4" fill="none" stroke="#02024f" stroke-width="2.7"/><path d="M18.2 1.8 L26 1.8 L26 9.4 Z" fill="#02024f"/></svg>
<div style="left:39.5px;top:417.0px;width:9.9px;height:9.7px;background:#0808ac;"></div>
<div style="left:50.5px;top:417.0px;width:10.0px;height:9.7px;background:#0808ac;"></div>
<div style="left:39.5px;top:427.8px;width:9.9px;height:9.9px;background:#0808ac;"></div>
<div style="left:50.5px;top:427.8px;width:10.0px;height:9.9px;background:#0808ac;"></div>
<svg style="left:74.0px;top:484.0px;" width="33.0" height="11.0" viewBox="0 0 33 11"><path d="M0.8 5.2 L10 1 L9 3.3 L23.8 3.3 L22.8 1 L32 5.2 L22.8 9.4 L23.8 7.2 L9 7.2 L10 9.4 Z" fill="#02024f"/></svg>
<svg style="left:76.1px;top:526.9px;" width="25.0" height="22.2" viewBox="0 0 25 22.2"><path d="M1 0 L7.9 0 L10.4 3 L10.4 6 L1 6 Z" fill="#02024f"/><rect x="20.6" y="2.9" width="3.2" height="4" fill="#02024f"/><path d="M5.6 6.2 L16.4 0.1 L17.9 0.1 L20.4 6.2 Z" fill="#cfdcf1"/><path d="M0 6 L25 6 L25 20.6 Q25 22.2 23.4 22.2 L1.2 22.2 L1.2 17 L0 14.6 Z" fill="#08086e"/></svg>
<div style="left:77.0px;top:605.0px;width:10.0px;height:9.9px;background:#fefefc;"></div>
<div style="left:77.0px;top:615.7px;width:10.0px;height:9.9px;background:#fefefc;"></div>
<div style="left:87.9px;top:605.0px;width:10.0px;height:9.9px;background:#fefefc;"></div>
<div style="left:87.9px;top:615.7px;width:10.0px;height:9.9px;background:#fefefc;"></div>
<div style="left:98.8px;top:605.0px;width:10.0px;height:9.9px;background:#fefefc;"></div>
<div style="left:98.8px;top:615.7px;width:10.0px;height:9.9px;background:#fefefc;"></div>
<svg style="left:76.0px;top:679.0px;" width="19.0" height="25.0" viewBox="0 0 19 25"><path d="M4 1 L4 23.3" stroke="#02024f" stroke-width="4.3" fill="none"/><path d="M15 1 L15 8 L11.2 9.8 L11.2 15.4 L4.6 18.8" stroke="#02024f" stroke-width="4.1" fill="none"/></svg>
<svg style="left:75.0px;top:727.0px;" width="31.0" height="31.0" viewBox="0 0 31 31"><circle cx="15.7" cy="15.4" r="12.7" fill="none" stroke="#02024f" stroke-width="4"/><rect x="13" y="8.1" width="4" height="9.8" fill="#02024f"/><rect x="9" y="13.7" width="4" height="4.2" fill="#0808ac"/></svg>
<svg style="left:40.0px;top:784.7px;" width="22.0" height="22.0" viewBox="0 0 22 22"><g fill="#0808ac"><rect x="0" y="15.3" width="6" height="6"/><rect x="5.1" y="12" width="4" height="3.6"/><rect x="9.4" y="9.2" width="2.7" height="2.8"/><rect x="12.2" y="5.4" width="3.9" height="3.8"/><rect x="16" y="0" width="5.5" height="5.6"/></g></svg>
<svg style="left:80.0px;top:852.0px;" width="22.0" height="22.0" viewBox="0 0 22 22"><g fill="#02024f"><rect x="0" y="15.3" width="6" height="6"/><rect x="5.1" y="12" width="4" height="3.6"/><rect x="9.4" y="9.2" width="2.7" height="2.8"/><rect x="12.2" y="5.4" width="3.9" height="3.8"/><rect x="16" y="0" width="5.5" height="5.6"/></g></svg>
<svg style="left:79.0px;top:895.4px;" width="24.0" height="30.0" viewBox="0 0 24 30"><g fill="none" stroke="#02024f" stroke-width="1.8"><path d="M1.9 1.9 L16.3 1.9 L22 7.2 L22 27.7 L1.9 27.7 Z"/><circle cx="14" cy="10" r="3.9"/><circle cx="10" cy="19.9" r="5.3"/></g></svg>
<svg style="left:36.0px;top:966.6px;" width="34.0" height="38.0" viewBox="0 0 34 38"><g fill="none" stroke="#0808ac" stroke-width="3.9" stroke-linejoin="miter"><rect x="4.15" y="16.5" width="25.9" height="17.9"/><path d="M4.15 16.5 L11.3 4.1 L23.4 4.1 L30.05 16.5"/></g></svg>
<svg style="left:83.3px;top:1047.1px;" width="24.6" height="21.6" viewBox="0 0 25 22.2"><path d="M1 0 L7.9 0 L10.4 3 L10.4 6 L1 6 Z" fill="#02024f"/><rect x="20.6" y="2.9" width="3.2" height="4" fill="#02024f"/><path d="M5.6 6.2 L16.4 0.1 L17.9 0.1 L20.4 6.2 Z" fill="#cfdcf1"/><path d="M0 6 L25 6 L25 20.6 Q25 22.2 23.4 22.2 L1.2 22.2 L1.2 17 L0 14.6 Z" fill="#08086e"/></svg>
<svg style="left:24.0px;top:1103.0px;" width="55.0" height="33.0" viewBox="0 0 55 33"><rect x="11" y="2.3" width="33.1" height="18.6" fill="#fff" stroke="#0808ac" stroke-width="3.9"/><path d="M9.1 20.6 L46.4 20.6 L54.2 32.6 L0.2 32.6 Z" fill="#0808ac"/></svg>
<svg style="left:69.8px;top:1172.7px;" width="43.6" height="32.0" viewBox="0 0 43.6 32"><path d="M0 21 A21.8 21 0 0 1 43.6 21 L43.6 25 Q43.6 32 36 32 L7.6 32 Q0 32 0 25 Z" fill="#02024f"/><g fill="#fff"><rect x="20.8" y="0" width="2" height="32"/><rect x="5.3" y="26.6" width="11.9" height="3.1" rx="1.5"/><rect x="26.3" y="26.6" width="11.5" height="3.1" rx="1.5"/><path d="M15.7 5.2 l1.9 1.9 l-1.9 1.9 l-1.9 -1.9 Z"/><path d="M9.7 9.6 l1.9 1.9 l-1.9 1.9 l-1.9 -1.9 Z"/><path d="M15.7 13.5 l1.9 1.9 l-1.9 1.9 l-1.9 -1.9 Z"/><path d="M6.9 16.3 l1.9 1.9 l-1.9 1.9 l-1.9 -1.9 Z"/><path d="M12.6 20.2 l1.9 1.9 l-1.9 1.9 l-1.9 -1.9 Z"/><path d="M26.6 5.2 l1.9 1.9 l-1.9 1.9 l-1.9 -1.9 Z"/><path d="M32.6 9.6 l1.9 1.9 l-1.9 1.9 l-1.9 -1.9 Z"/><path d="M26.6 13.5 l1.9 1.9 l-1.9 1.9 l-1.9 -1.9 Z"/><path d="M35.6 16.3 l1.9 1.9 l-1.9 1.9 l-1.9 -1.9 Z"/><path d="M29.9 20.2 l1.9 1.9 l-1.9 1.9 l-1.9 -1.9 Z"/></g></svg>
<svg style="left:39.0px;top:1240.0px;" width="26.0" height="31.0" viewBox="0 0 26 31"><path d="M6.4 14 L6.4 9.4 A6.2 6.4 0 0 1 18.8 9.4 L18.8 14" fill="none" stroke="#1313c4" stroke-width="4.1"/><rect x="0.9" y="13.3" width="23.1" height="16.8" rx="3" fill="#1313c4"/><circle cx="12.6" cy="21" r="2.2" fill="#000"/><path d="M11.7 21.6 L13.5 21.6 L14.8 27.5 L10.4 27.5 Z" fill="#000"/></svg>
<svg style="left:38.0px;top:1312.0px;" width="28.0" height="26.0" viewBox="0 0 28 26"><g fill="none" stroke="#0808ac"><path d="M2 1.2 L2 23.3 L26 23.3" stroke-width="1.9"/><path d="M5.6 19.6 L12 11.2 L17.4 14.2 L25 5.8" stroke-width="2.2"/><path d="M19.6 6.2 L25.3 5.6 L24.8 11.6" stroke-width="1.9"/></g></svg>
<svg style="left:990.0px;top:720.0px;" width="100.0" height="100.0" viewBox="0 0 1568 1568"><g fill="#000"><path d="M280 380 Q280 345 315 345 L1205 345 L1240 380 L1240 1185 L950 1410 L315 1410 Q280 1410 280 1375 Z"/><rect x="455" y="218" width="122" height="200" rx="58"/><rect x="700" y="218" width="118" height="200" rx="58"/><rect x="938" y="218" width="114" height="200" rx="58"/></g><g fill="#e6e7e8"><rect x="395" y="458" width="655" height="122" rx="45"/><rect x="395" y="688" width="655" height="127" rx="45"/><rect x="395" y="935" width="483" height="130" rx="55"/></g></svg>
<svg style="left:1200.0px;top:745.0px;" width="125.0" height="80.0" viewBox="1200 745 125 80"><g fill="#f2f2f2" stroke="#555" stroke-width="0.45"><polygon points="1208.63,772.68 1277.37,810.59 1314.14,786.49 1254.16,757.44"/></g><g fill="#000"><polygon points="1211.23,772.82 1231.95,784.21 1238.76,781.33 1218.45,770.37"/><polygon points="1233.96,785.31 1254.68,796.70 1261.02,793.36 1240.72,782.39"/><polygon points="1256.69,797.80 1277.41,809.20 1283.29,805.38 1262.99,794.42"/><polygon points="1220.04,769.83 1228.51,774.39 1235.56,771.76 1227.27,767.38"/><polygon points="1230.47,775.44 1251.66,786.84 1258.22,783.72 1237.48,772.77"/><polygon points="1253.61,787.89 1274.15,798.93 1280.24,795.34 1260.14,784.73"/><polygon points="1276.10,799.99 1284.58,804.55 1290.46,800.73 1282.16,796.35"/><polygon points="1228.85,766.84 1248.55,777.19 1255.35,774.31 1236.08,764.39"/><polygon points="1250.45,778.19 1270.15,788.54 1276.49,785.20 1257.21,775.27"/><polygon points="1272.05,789.54 1291.75,799.89 1297.62,796.08 1278.35,786.16"/><polygon points="1237.66,763.85 1245.71,767.97 1252.75,765.34 1244.89,761.40"/><polygon points="1247.56,768.92 1267.67,779.23 1274.24,776.11 1254.57,766.25"/><polygon points="1269.53,780.18 1289.02,790.17 1295.11,786.57 1276.05,777.02"/><polygon points="1290.87,791.12 1298.92,795.24 1304.79,791.43 1296.93,787.48"/><polygon points="1246.47,760.86 1265.14,770.17 1271.94,767.29 1253.70,758.41"/><polygon points="1266.95,771.07 1285.61,780.38 1291.95,777.03 1273.71,768.15"/><polygon points="1287.42,781.28 1306.08,790.59 1311.96,786.78 1293.72,777.89"/></g></svg>
<svg style="left:1440.0px;top:720.0px;" width="110.0" height="110.0" viewBox="0 0 1568 1568"><circle cx="752" cy="767" r="592" fill="#231f20"/><g fill="#fff"><path d="M585 487 L720 487 L762 445 L805 487 L925 487 L925 600 L1085 762 L1005 842 L800 645 L720 645 L500 842 L422 760 L585 605 Z"/><path d="M730 712 L780 712 L880 812 L880 862 L780 965 L730 965 L628 862 L628 812 Z"/></g></svg>
<svg style="left:1715.0px;top:730.0px;" width="100.0" height="100.0" viewBox="0 0 1568 1568"><g fill="none" stroke="#000" stroke-width="95"><path d="M250 783 A548 548 0 0 1 1265 493"/><path d="M1350 783 A548 548 0 0 1 335 1073"/></g><g fill="#000"><rect x="1300" y="360" width="95" height="250"/><rect x="1145" y="530" width="250" height="80"/><rect x="205" y="955" width="92" height="250"/><rect x="205" y="955" width="250" height="80"/></g><rect x="537" y="470" width="531" height="625" rx="85" fill="#231f20"/></svg>
<svg style="left:1945.0px;top:730.0px;" width="100.0" height="100.0" viewBox="0 0 1568 1568"><path d="M233 310 A370 125 0 0 1 973 310 L973 1065 A370 125 0 0 1 233 1065 Z" fill="#000"/><g fill="none" stroke="#e6e7e8" stroke-width="34"><path d="M225 385 Q603 560 981 385"/><path d="M225 620 Q603 790 981 620"/><path d="M225 870 Q603 1040 981 870"/></g><circle cx="1073" cy="1025" r="290" fill="#e6e7e8"/><circle cx="1073" cy="1025" r="248" fill="#000"/><circle cx="1073" cy="1025" r="215" fill="#e6e7e8"/><circle cx="1073" cy="1025" r="180" fill="#000"/><g fill="#e6e7e8"><rect x="1058" y="858" width="30" height="45" transform="rotate(0 1073 1025)"/><rect x="1058" y="858" width="30" height="45" transform="rotate(30 1073 1025)"/><rect x="1058" y="858" width="30" height="45" transform="rotate(60 1073 1025)"/><rect x="1058" y="858" width="30" height="45" transform="rotate(90 1073 1025)"/><rect x="1058" y="858" width="30" height="45" transform="rotate(120 1073 1025)"/><rect x="1058" y="858" width="30" height="45" transform="rotate(150 1073 1025)"/><rect x="1058" y="858" width="30" height="45" transform="rotate(180 1073 1025)"/><rect x="1058" y="858" width="30" height="45" transform="rotate(210 1073 1025)"/><rect x="1058" y="858" width="30" height="45" transform="rotate(240 1073 1025)"/><rect x="1058" y="858" width="30" height="45" transform="rotate(270 1073 1025)"/><rect x="1058" y="858" width="30" height="45" transform="rotate(300 1073 1025)"/><rect x="1058" y="858" width="30" height="45" transform="rotate(330 1073 1025)"/></g><path d="M1073 925 L1073 1035 L1150 1100" fill="none" stroke="#fff" stroke-width="42"/><g fill="none" stroke="#000" stroke-width="46"><path d="M1005 445 L1168 445 L1168 378"/><path d="M1005 515 L1278 515 L1278 598"/></g><g fill="#000"><path d="M1168 250 L1210 293 L1168 336 L1126 293 Z"/><path d="M1278 622 L1322 665 L1278 708 L1234 665 Z"/></g></svg>
<div style="left:2398.8px;top:81.0px;width:1.2px;height:1454.0px;background:#5e5e60;"></div>
</body></html>
